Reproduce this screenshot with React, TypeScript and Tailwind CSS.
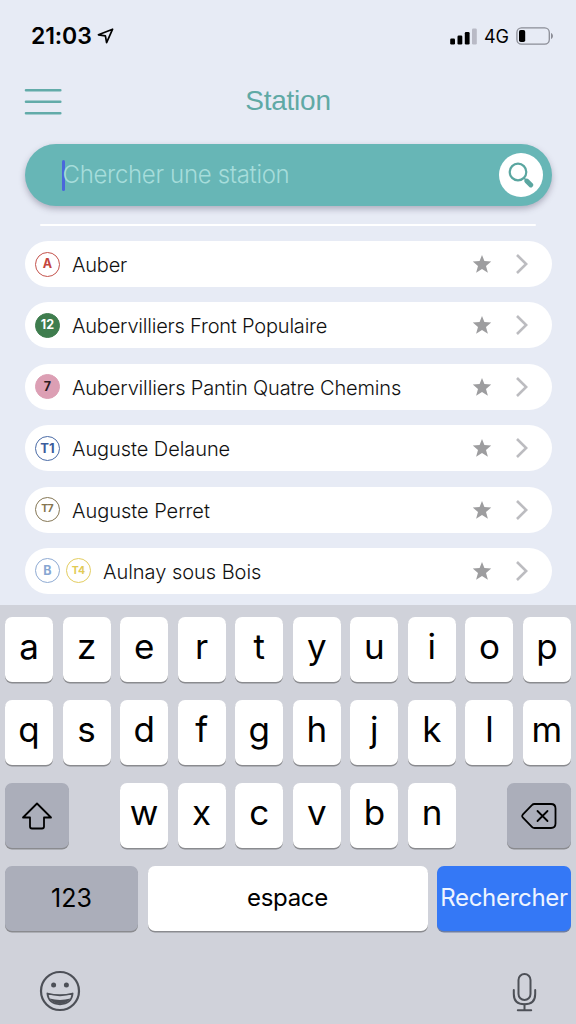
import React, { useState } from 'react';

interface Line {
  label: string;
  className: string;
}

interface Station {
  id: string;
  name: string;
  lines: Line[];
  spacing: string;
}

const stations: Station[] = [
  {
    id: '1',
    name: 'Auber',
    lines: [{ label: 'A', className: 'text-[#c4453d] border-[#c4534c] text-[12.5px]' }],
    spacing: 'tracking-[-0.2px]',
  },
  {
    id: '2',
    name: 'Aubervilliers Front Populaire',
    lines: [{ label: '12', className: 'text-white bg-[#3f7d4e] border-[#3f7d4e] text-[12.5px]' }],
    spacing: 'tracking-[-0.2px]',
  },
  {
    id: '3',
    name: 'Aubervilliers Pantin Quatre Chemins',
    lines: [{ label: '7', className: 'text-[#2a1c22] bg-[#dc9fb4] border-[#dc9fb4] text-[12.5px]' }],
    spacing: 'tracking-[-0.15px]',
  },
  {
    id: '4',
    name: 'Auguste Delaune',
    lines: [{ label: 'T1', className: 'text-[#3b5d9c] border-[#4a6ba6] text-[13px]' }],
    spacing: 'tracking-[-0.07px]',
  },
  {
    id: '5',
    name: 'Auguste Perret',
    lines: [{ label: 'T7', className: 'text-[#857650] border-[#857755] text-[10.5px]' }],
    spacing: 'tracking-[-0.03px]',
  },
  {
    id: '6',
    name: 'Aulnay sous Bois',
    lines: [
      { label: 'B', className: 'text-[#87a6d2] border-[#8fabd3] text-[12.5px]' },
      { label: 'T4', className: 'text-[#e2cb55] border-[#e3cd60] text-[10.5px]' },
    ],
    spacing: 'tracking-[-0.03px]',
  },
];

const keyRows = ['azertyuiop', 'qsdfghjklm'];

const StatusBar: React.FC = () => (
  <div className="flex h-[72px] items-center justify-between pl-[31px] pr-[22px]">
    <div className="flex items-center gap-[5px]">
      <span className="text-[23px] leading-none font-semibold tracking-[-0.1px]">21:03</span>
      <svg width="17" height="16" viewBox="0 0 17 16" fill="none" stroke="#000" strokeWidth="1.7" strokeLinejoin="round">
        <path d="M15.6 1.2 L1.4 6.8 L8.4 7.8 L9.6 14.6 Z" />
      </svg>
    </div>
    <div className="flex items-center">
      <svg width="27" height="17" viewBox="0 0 27 17">
        <rect x="0.2" y="10.5" width="4.8" height="6" rx="1.2" />
        <rect x="7.5" y="7.5" width="4.8" height="9" rx="1.2" />
        <rect x="14.8" y="4" width="4.8" height="12.5" rx="1.2" />
        <rect x="22" y="0.5" width="4.8" height="16" rx="1.2" fill="#b9bac6" />
      </svg>
      <span className="ml-[7px] w-[25px] pt-[1px] text-[18px] leading-none font-normal tracking-[-0.1px]">4G</span>
      <svg className="ml-[7px]" width="38" height="18" viewBox="0 0 38 18">
        <rect x="0.9" y="0.9" width="32.4" height="16.2" rx="4.6" fill="none" stroke="#8b8d96" strokeWidth="1.3" />
        <rect x="3" y="3" width="6.2" height="12" rx="1.8" />
        <path d="M35 6 C37.6 7 37.6 11 35 12 Z" fill="#8b8d96" />
      </svg>
    </div>
  </div>
);

const Star: React.FC = () => (
  <svg width="20" height="20" viewBox="0 0 20 20" fill="#9d9d9f">
    <path d="M10 0.9 L12.4 7.1 L19.2 7.6 L14 12 L15.9 18.8 L10 15.1 L4.1 18.8 L6 12 L0.8 7.6 L7.6 7.1 Z" />
  </svg>
);

const StationRow: React.FC<{ station: Station }> = ({ station }) => (
  <li className="flex h-[46px] items-center rounded-full bg-white pl-[10.5px] pr-[23.5px]">
    <div className="flex gap-[6px]">
      {station.lines.map((line) => (
        <span
          key={line.label}
          className={`flex h-[25px] w-[25px] items-center justify-center rounded-full border font-bold leading-none ${line.className}`}
        >
          {line.label}
        </span>
      ))}
    </div>
    <span className={`ml-3 flex-1 whitespace-nowrap pt-[2px] text-[20px] leading-none font-light text-[#111] ${station.spacing}`}>
      {station.name}
    </span>
    <Star />
    <svg className="ml-6" width="12" height="20" viewBox="0 0 12 20" fill="none" stroke="#bcbcc0" strokeWidth="2.6">
      <path d="M1 1 L10.2 10 L1 19" />
    </svg>
  </li>
);

const LetterKey: React.FC<{ letter: string; onPress: (letter: string) => void }> = ({ letter, onPress }) => (
  <button
    onClick={() => onPress(letter)}
    className="flex h-[65px] w-12 items-center justify-center rounded-[7px] bg-white pb-[6px] text-[35px] leading-none font-[370] shadow-[0_1.5px_0_#8a8b8f]"
  >
    {letter}
  </button>
);

const Keyboard: React.FC<{ onPress: (letter: string) => void; onDelete: () => void }> = ({ onPress, onDelete }) => (
  <div className="flex h-[419px] flex-col bg-[#d0d2da] px-[5px] pt-3">
    <div className="flex flex-col gap-[18px]">
      {keyRows.map((row) => (
        <div key={row} className="flex justify-between">
          {row.split('').map((letter) => (
            <LetterKey key={letter} letter={letter} onPress={onPress} />
          ))}
        </div>
      ))}
      <div className="flex justify-between">
        <button className="flex h-[65px] w-16 items-center justify-center rounded-[7px] bg-[#abaeba] shadow-[0_1.5px_0_#8a8b8f]">
          <svg width="32" height="28" viewBox="0 0 32 28" fill="none" stroke="#000" strokeWidth="1.8" strokeLinejoin="round">
            <path d="M16 1.5 L30 15.5 H23 V24.5 Q23 26.5 21 26.5 H11 Q9 26.5 9 24.5 V15.5 H2 Z" />
          </svg>
        </button>
        <div className="flex w-[336px] justify-between">
          {'wxcvbn'.split('').map((letter) => (
            <LetterKey key={letter} letter={letter} onPress={onPress} />
          ))}
        </div>
        <button
          onClick={onDelete}
          className="flex h-[65px] w-16 items-center justify-center rounded-[7px] bg-[#abaeba] shadow-[0_1.5px_0_#8a8b8f]"
        >
          <svg width="36" height="28" viewBox="0 0 36 28" fill="none" stroke="#000" strokeWidth="1.8" strokeLinejoin="round" strokeLinecap="round">
            <path d="M13.5 2 H30 Q34.5 2 34.5 6.5 V21.5 Q34.5 26 30 26 H13.5 Q12 26 10.9 24.8 L1.7 15.3 Q0.7 14 1.7 12.7 L10.9 3.2 Q12 2 13.5 2 Z" />
            <path d="M16.5 9 L26.5 19 M26.5 9 L16.5 19" />
          </svg>
        </button>
      </div>
      <div className="flex justify-between text-[24px] leading-none">
        <button className="h-[65px] w-[133px] rounded-[7px] bg-[#abaeba] text-[25px] font-[370] shadow-[0_1.5px_0_#8a8b8f]">123</button>
        <button className="h-[65px] w-[280px] rounded-[7px] bg-white pb-[1px] font-[370] tracking-[-0.3px] shadow-[0_1.5px_0_#8a8b8f]">
          espace
        </button>
        <button className="h-[65px] w-[134px] whitespace-nowrap rounded-[7px] bg-[#3478f6] pb-[1px] font-normal tracking-[-0.3px] text-[#eef4ff] shadow-[0_1.5px_0_#6c7da3]">
          Rechercher
        </button>
      </div>
    </div>
    <div className="mt-[39px] flex items-start justify-between pl-[34px] pr-[34px]">
      <svg width="42" height="42" viewBox="0 0 42 42" fill="none" stroke="#4d5057" strokeWidth="2.2">
        <circle cx="21" cy="21" r="19" />
        <circle cx="14.6" cy="15" r="2.5" fill="#4d5057" stroke="none" />
        <circle cx="27.4" cy="15" r="2.5" fill="#4d5057" stroke="none" />
        <path d="M8.4 23.5 Q21 27 33.6 23.5 Q32.5 34 21 34.3 Q9.5 34 8.4 23.5 Z" strokeWidth="1.8" strokeLinejoin="round" />
        <path d="M10.6 28.6 Q21 31.2 31.4 28.6 Q28 34 21 34 Q14 34 10.6 28.6 Z" fill="#4d5057" stroke="none" />
      </svg>
      <svg className="mt-[2px]" width="25" height="40" viewBox="0 0 25 40" fill="none" stroke="#4d5057" strokeWidth="2" strokeLinecap="round">
        <rect x="6.5" y="2" width="12" height="26" rx="6" />
        <path d="M1.8 18 V22 Q1.8 32.3 12.5 32.3 Q23.2 32.3 23.2 22 V18" />
        <path d="M12.5 32.5 V38 M5.8 38.3 H19.2" />
      </svg>
    </div>
  </div>
);

const App: React.FC = () => {
  const [query, setQuery] = useState('');

  return (
    <div className="flex h-[1024px] w-[576px] flex-col overflow-hidden bg-[#e7ebf5] font-['Inter',sans-serif] text-black">
      <StatusBar />

      <header className="grid h-[72px] grid-cols-[38px_1fr_38px] items-center px-6 pb-[13px]">
        <button>
          <svg width="38" height="28" viewBox="0 0 38 28" stroke="#62aba9" strokeWidth="2.6" strokeLinecap="round">
            <path d="M2 2.2 H36.3 M2 13.8 H36.3 M2 25.2 H36.3" />
          </svg>
        </button>
        <h1 className="pb-[2px] text-center font-['Liberation_Sans',sans-serif] text-[28px] leading-none tracking-[-0.25px] text-[#5fa9a5]">
          Station
        </h1>
      </header>

      <div className="mx-[24.5px] flex h-[62px] shrink-0 items-center rounded-full bg-[#67b6b6] pl-[37px] pr-[8.5px] shadow-[0_3px_6px_rgba(70,60,90,0.35)]">
        <span className="h-[31px] w-[3px] rounded-full bg-[#4a67dc]" />
        <span className="-ml-[2px] flex-1 whitespace-nowrap text-[24px] leading-none font-light tracking-[-0.33px] text-[#a6dddb]">
          {query || 'Chercher une station'}
        </span>
        <button className="flex h-11 w-11 items-center justify-center rounded-full bg-white">
          <svg width="26" height="26" viewBox="0 0 26 26" fill="none" stroke="#5aa6a0">
            <circle cx="10" cy="10" r="8.3" strokeWidth="2.2" />
            <path d="M18.8 19 L22.8 23" strokeWidth="4.8" strokeLinecap="round" />
            <path d="M16 16 L18 18" strokeWidth="1.6" />
          </svg>
        </button>
      </div>

      <div className="mx-10 mt-[18px] h-[2px] shrink-0 rounded-full bg-white" />

      <ul className="mx-[24.5px] mt-[15px] flex h-[364px] shrink-0 flex-col gap-[15.4px]">
        {stations.map((station) => (
          <StationRow key={station.id} station={station} />
        ))}
      </ul>

      <Keyboard onPress={(letter) => setQuery(query + letter)} onDelete={() => setQuery(query.slice(0, -1))} />
    </div>
  );
};

export default App;
